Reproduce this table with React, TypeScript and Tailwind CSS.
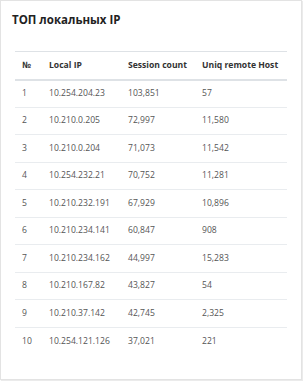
import React from 'react';

const rows = [
    ['1', '10.254.204.23', '103,851', '57'],
    ['2', '10.210.0.205', '72,997', '11,580'],
    ['3', '10.210.0.204', '71,073', '11,542'],
    ['4', '10.254.232.21', '70,752', '11,281'],
    ['5', '10.210.232.191', '67,929', '10,896'],
    ['6', '10.210.234.141', '60,847', '908'],
    ['7', '10.210.234.162', '44,997', '15,283'],
    ['8', '10.210.167.82', '43,827', '54'],
    ['9', '10.210.37.142', '42,745', '2,325'],
    ['10', '10.254.121.126', '37,021', '221'],
];

const App: React.FC = () => {
    return (
        <div className="w-[303px] h-[381px] bg-white" style={{ fontFamily: '"Open Sans", "Noto Sans", sans-serif' }}>
            <div className="w-[302px] h-[380px] border border-[#e3e3e3] shadow-[1px_1px_1px_rgba(0,0,0,0.08)] pt-[10px]">
                <h2 className="pl-[11px] text-[11.5px] leading-[18px] font-bold text-[#222]">ТОП локальных IP</h2>
                <table className="ml-[14px] mt-[22px] w-[272px] border-collapse text-[8.6px] text-[#555]">
                    <thead>
                        <tr className="h-[28px] border-t border-b-2 border-[#dee2e6] text-left text-[#333]">
                            <th className="w-[27px] pl-[7px] font-bold">№</th>
                            <th className="w-[79px] pl-[7px] font-bold">Local IP</th>
                            <th className="w-[74px] pl-[7px] font-bold">Session count</th>
                            <th className="pl-[7px] font-bold">Uniq remote Host</th>
                        </tr>
                    </thead>
                    <tbody>
                        {rows.map((r, i) => (
                            <tr key={r[0]} className={i > 0 ? 'h-[27.5px] border-t border-[#e9ecef]' : 'h-[27.5px]'}>
                                {r.map((c, j) => (
                                    <td key={j} className="pl-[7px]">{c}</td>
                                ))}
                            </tr>
                        ))}
                    </tbody>
                </table>
            </div>
        </div>
    );
};

export default App;
